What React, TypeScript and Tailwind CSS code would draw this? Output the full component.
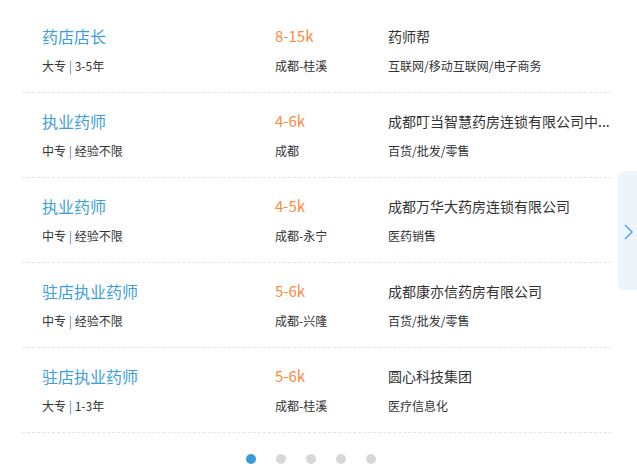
type Job = {
  title: string
  edu: string
  exp: string
  salary: string
  city: string
  company: string
  industry: string
}

const jobs: Job[] = [
  { title: "药店店长", edu: "大专", exp: "3-5年", salary: "8-15k", city: "成都-桂溪", company: "药师帮", industry: "互联网/移动互联网/电子商务" },
  { title: "执业药师", edu: "中专", exp: "经验不限", salary: "4-6k", city: "成都", company: "成都叮当智慧药房连锁有限公司中...", industry: "百货/批发/零售" },
  { title: "执业药师", edu: "中专", exp: "经验不限", salary: "4-5k", city: "成都-永宁", company: "成都万华大药房连锁有限公司", industry: "医药销售" },
  { title: "驻店执业药师", edu: "中专", exp: "经验不限", salary: "5-6k", city: "成都-兴隆", company: "成都康亦信药房有限公司", industry: "百货/批发/零售" },
  { title: "驻店执业药师", edu: "大专", exp: "1-3年", salary: "5-6k", city: "成都-桂溪", company: "圆心科技集团", industry: "医疗信息化" },
]

function JobRow({ job }: { job: Job }) {
  return (
    <div className="flex h-[85px] border-b border-dashed border-[#e4e4e4] pl-5 pt-[18px]">
      {/* title + requirements */}
      <div className="w-[233px]">
        <div className="text-[16px] leading-5 text-[#3c9edc]">{job.title}</div>
        <div className="mt-[11px] text-[12px] leading-[18px] text-[#333]">
          {job.edu} <span className="text-[#5a7fb5]">|</span> {job.exp}
        </div>
      </div>

      {/* salary + city */}
      <div className="w-[113px]">
        <div className="text-[15px] leading-5 text-[#ff8a3d]">{job.salary}</div>
        <div className="mt-[11px] text-[12px] leading-[18px] text-[#333]">{job.city}</div>
      </div>

      {/* company + industry */}
      <div className="w-[224px]">
        <div className="whitespace-nowrap text-[14px] leading-5 text-[#333]">{job.company}</div>
        <div className="mt-[11px] text-[12px] leading-[18px] text-[#333]">{job.industry}</div>
      </div>
    </div>
  )
}

export default function App() {
  return (
    <div
      className="relative h-[474px] w-[637px] overflow-hidden bg-white"
      style={{ fontFamily: '"Noto Sans CJK SC", "Noto Sans", sans-serif' }}
    >
      <div className="ml-[22px] w-[590px] pt-2">
        {jobs.map((job, i) => (
          <JobRow key={i} job={job} />
        ))}
      </div>

      {/* pager dots */}
      <div className="mt-[21px] flex justify-center gap-5 pr-[16px]">
        {[0, 1, 2, 3, 4].map((i) => (
          <span
            key={i}
            className={i === 0 ? "h-[10px] w-[10px] rounded-full bg-[#3a9ad6]" : "h-[10px] w-[10px] rounded-full bg-[#d8d8d8]"}
          />
        ))}
      </div>

      {/* next arrow */}
      <div className="absolute left-[618px] top-[171px] h-[119px] w-[24px] rounded-l-md bg-[#edf5fb]">
        <svg className="absolute left-0 top-0" width="24" height="119" viewBox="0 0 24 119" fill="none">
          <polyline points="7,54 14,61 7,68" stroke="#4aa3dd" strokeWidth="1.4" />
        </svg>
      </div>
    </div>
  )
}
